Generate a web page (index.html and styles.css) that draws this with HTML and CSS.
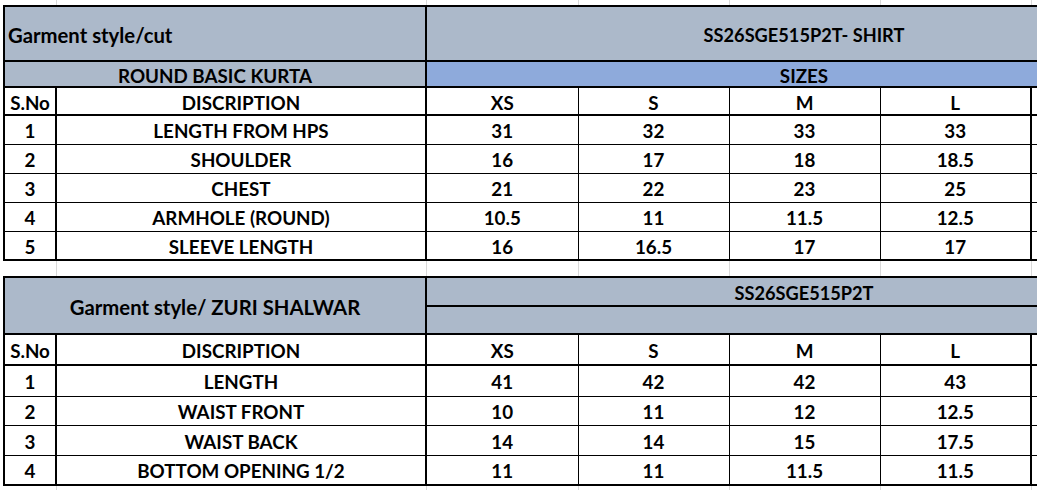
FILE: index.html
```html
<!DOCTYPE html>
<html>
<head>
<meta charset="utf-8">
<link rel="stylesheet" href="styles.css">
</head>
<body>
<div class="sheet">
<table class="grid">
<colgroup>
<col class="c-no"><col class="c-desc"><col class="c-xs"><col class="c-s"><col class="c-m"><col class="c-l"><col class="c-x">
</colgroup>
<tbody>
<tr class="spacer sp-top"><td></td><td></td><td></td><td></td><td></td><td></td><td></td></tr>

<tr class="r-title t-top hb"><td colspan="2" class="hdr lft mixed">Garment style/cut</td><td colspan="5" class="hdr code">SS26SGE515P2T- SHIRT</td></tr>
<tr class="r-sub hb"><td colspan="2" class="hdr">ROUND BASIC KURTA</td><td colspan="5" class="sizes">SIZES</td></tr>
<tr class="r-head hb"><td class="no">S.No</td><td class="desc">DISCRIPTION</td><td>XS</td><td>S</td><td>M</td><td class="lcol">L</td><td></td></tr>
<tr class="r-data"><td class="no">1</td><td class="desc">LENGTH FROM HPS</td><td>31</td><td>32</td><td>33</td><td class="lcol">33</td><td></td></tr>
<tr class="r-data"><td class="no">2</td><td class="desc">SHOULDER</td><td>16</td><td>17</td><td>18</td><td class="lcol">18.5</td><td></td></tr>
<tr class="r-data"><td class="no">3</td><td class="desc">CHEST</td><td>21</td><td>22</td><td>23</td><td class="lcol">25</td><td></td></tr>
<tr class="r-data"><td class="no">4</td><td class="desc">ARMHOLE (ROUND)</td><td>10.5</td><td>11</td><td>11.5</td><td class="lcol">12.5</td><td></td></tr>
<tr class="r-data hb"><td class="no">5</td><td class="desc">SLEEVE LENGTH</td><td>16</td><td>16.5</td><td>17</td><td class="lcol">17</td><td></td></tr>

<tr class="spacer sp-gap"><td></td><td></td><td></td><td></td><td></td><td></td><td></td></tr>

<tr class="r-t2a t-top hb"><td colspan="2" rowspan="2" class="hdr mixed">Garment style/ ZURI SHALWAR</td><td colspan="5" class="hdr code">SS26SGE515P2T</td></tr>
<tr class="r-t2b hb"><td colspan="5" class="hdr"></td></tr>
<tr class="r-head2 hb"><td class="no">S.No</td><td class="desc">DISCRIPTION</td><td>XS</td><td>S</td><td>M</td><td class="lcol">L</td><td></td></tr>
<tr class="r-data2 r-tall"><td class="no">1</td><td class="desc">LENGTH</td><td>41</td><td>42</td><td>42</td><td class="lcol">43</td><td></td></tr>
<tr class="r-data2 r-short"><td class="no">2</td><td class="desc">WAIST FRONT</td><td>10</td><td>11</td><td>12</td><td class="lcol">12.5</td><td></td></tr>
<tr class="r-data2"><td class="no">3</td><td class="desc">WAIST BACK</td><td>14</td><td>14</td><td>15</td><td class="lcol">17.5</td><td></td></tr>
<tr class="r-data2 hb"><td class="no">4</td><td class="desc">BOTTOM OPENING 1/2</td><td>11</td><td>11</td><td>11.5</td><td class="lcol">11.5</td><td></td></tr>

<tr class="spacer sp-bot"><td></td><td></td><td></td><td></td><td></td><td></td><td></td></tr>
</tbody>
</table>
</div>
</body>
</html>
```

FILE: styles.css
```css
html, body {
  margin: 0;
  padding: 0;
  background: #ffffff;
}

.sheet {
  width: 1037px;
  height: 490px;
  overflow: hidden;
  background: #ffffff;
}

.grid {
  margin-left: 3px;
  border-collapse: collapse;
  table-layout: fixed;
  width: 1178px;
  font-family: "Lato", "Liberation Sans", sans-serif;
  font-weight: 700;
  font-size: 18.8px;
  color: #000000;
}

.c-no { width: 52px; }
.c-desc { width: 370px; }
.c-xs { width: 152px; }
.c-s, .c-m, .c-l, .c-x { width: 151px; }

.grid td {
  border: 1px solid #000000;
  padding: 3px 0 0 0;
  text-align: center;
  vertical-align: middle;
  white-space: nowrap;
  overflow: hidden;
  line-height: 20px;
}

/* thick borders */
.grid td.no { border-left-width: 2px; border-right-width: 2px; }
.grid td.desc { border-right-width: 2px; }
.grid td.lcol { border-right-width: 2px; }
.grid tr.hb td { border-bottom-width: 2px; }
.grid tr.t-top td { border-top-width: 2px; }
.grid td.hdr { background: #acb9ca; border-width: 2px; }
.grid td.sizes { background: #8eaadb; border-width: 2px; }
.grid td.lft { text-align: left; padding-left: 3px; }
.grid td.mixed { font-size: 20.3px; }
.grid td.code { font-size: 18.2px; }

/* gridline rows */
.grid tr.spacer td {
  border-top: none;
  border-bottom: none;
  border-left: 1px solid #d9d9d9;
  border-right: 1px solid #d9d9d9;
  padding: 0;
}
.grid tr.spacer td:first-child { border-left: none; }

.sp-top { height: 6px; }
.r-title { height: 55px; }
.r-sub { height: 26px; }
.r-head { height: 28px; }
.r-data { height: 29px; }
.sp-gap { height: 17px; }
.r-t2a { height: 29px; }
.r-t2b { height: 28px; }
.r-head2 { height: 31px; }
.r-data2 { height: 30px; }
.r-data2.r-tall { height: 31px; }
.r-data2.r-short { height: 29px; }
.sp-bot { height: 10px; }
```
